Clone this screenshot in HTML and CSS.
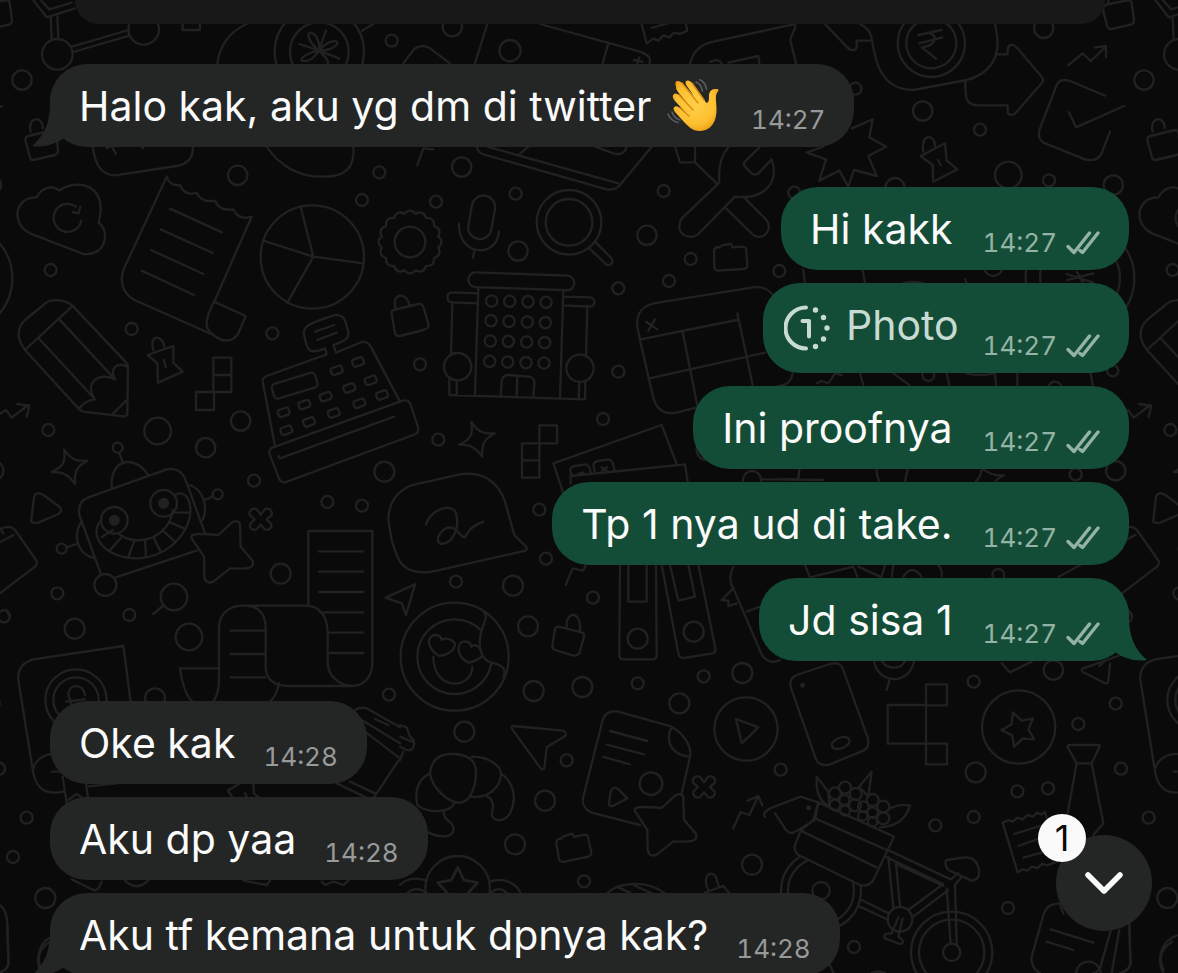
FILE: index.html
```html
<!DOCTYPE html>
<html lang="id">
<head>
<meta charset="utf-8">
<meta name="viewport" content="width=device-width, initial-scale=1">
<title>Chat</title>
<link rel="stylesheet" href="styles.css">
</head>
<body>
<svg class="defs" width="0" height="0" aria-hidden="true">
  <defs>
    <symbol id="ticks" viewBox="0 0 34 24"><path d="M2 15.500L8 21.500L23.500 2M14 19.500L16.500 21.500L32 2" fill="none" stroke="currentColor" stroke-width="3.400" stroke-linecap="round" stroke-linejoin="round"/></symbol>
    <symbol id="tail" viewBox="0 0 44 60"><path d="M18 16C18 35 13 48 0 59C12 61 24 57 32 51L44 40V16Z" fill="currentColor"/></symbol>
  </defs>
</svg>
<div class="chat">
<svg class="wallpaper" aria-hidden="true">
  <defs>
    <path id="sparkle" d="M192,388C210,415 225,425 262,422C230,440 222,455 225,492C205,465 190,455 155,456C190,440 198,425 192,388Z"/>
    <path id="star" d="M575,655C570,640 590,640 655,645L695,608C710,598 722,605 720,620L722,680L758,722C765,745 745,748 690,745L640,785C620,793 612,780 613,765L612,710Z"/>
    <path id="clover" d="M0-14L12-30A14,14 0 0 1 32-12L18,0L32,14A14,14 0 0 1 12,30L0,16L-12,30A14,14 0 0 1-32,14L-18,0L-32-12A14,14 0 0 1-12-30Z"/>
    <path id="five" d="M0-50L16-18L50-12L26,14L32,48L0,34L-32,48L-26,14L-50-12L-16-18Z"/>
    <path id="folder" d="M942,752Q944,740 958,742L966,736L993,732L998,742L1030,740Q1040,742 1039,755L1042,795Q1042,806 1030,807L955,812Q944,812 943,800Z"/>
    <g id="teeth"><path d="M-17-85Q0-104 17-85"/><path d="M-17-85Q0-104 17-85" transform="rotate(22.500)"/><path d="M-17-85Q0-104 17-85" transform="rotate(45)"/><path d="M-17-85Q0-104 17-85" transform="rotate(67.500)"/></g>
    <rect id="key" x="-17" y="-11" width="34" height="22" rx="7" transform="rotate(-20)"/>
    <g id="doodles">
      <g transform="scale(.33333)">
        <circle cx="172" cy="163" r="46"/><circle cx="431" cy="88" r="46"/>
        <path d="M152,50L155,118M172,50L175,118M216,140L386,90M220,156L388,107M100,0L140,52L225,25M122,0L148,28L215,8M548,60V90H600V60"/>
        <circle cx="66" cy="240" r="29"/><circle cx="1175" cy="122" r="18"/><circle cx="713" cy="526" r="29"/><circle cx="1138" cy="517" r="18"/><circle cx="1086" cy="600" r="18"/><circle cx="152" cy="810" r="18"/>
        <circle cx="958" cy="155" r="88"/><circle cx="958" cy="155" r="134"/>
        <path d="M652,190C660,130 690,95 740,72M1086,92L1120,72"/>
        <path d="M957,152C925,125 918,98 932,98C948,100 962,130 957,152C985,118 1015,120 1012,130C1005,145 980,152 957,152C935,155 900,170 905,182C930,188 945,170 957,152C990,185 990,190 975,200M978,92L957,152L898,132M957,152L1018,176"/>
        <path d="M92,395C80,350 130,345 128,385M85,408L160,390Q168,390 170,400L174,455Q173,462 165,465L100,480Q92,480 90,473L76,420Q76,410 85,408Z"/>
        <path d="M278,440C285,490 300,525 345,526L530,498C565,492 580,470 578,440M320,445L335,438L348,462M425,440L430,445M800,440C840,500 900,530 965,530C1040,532 1065,500 1060,440"/>
        <path d="M110,592C125,560 160,555 178,572C220,540 305,545 302,635L296,668C330,690 320,770 250,762L90,700C30,670 45,590 110,592ZM228,620A42,42 0 1 0 244,662M241,620L236,640L218,636"/>
        <path d="M500,530Q510,560 540,555Q555,590 590,578Q605,610 645,602Q660,635 700,628Q715,662 755,650L645,900C612,960 612,985 640,1005C670,1030 700,1025 715,1000L737,948L642,905M500,530L370,810C355,860 380,890 410,903L640,1005M510,626L666,697M482,688L638,759M453,750L610,822M425,812L582,885"/>
        <circle cx="937" cy="771" r="155"/><path d="M940,770L902,620M940,770L790,722M940,770L1090,790M940,770L862,908"/>
      </g>
      <g transform="translate(410 242) scale(.33333)"><circle r="46"/><use href="#teeth"/><use href="#teeth" transform="rotate(90)"/><use href="#teeth" transform="rotate(180)"/><use href="#teeth" transform="rotate(270)"/></g>
      <g transform="translate(400 0) scale(.33333)">
        <circle cx="157" cy="80" r="29"/><circle cx="330" cy="152" r="32"/><circle cx="185" cy="501" r="29"/><circle cx="347" cy="581" r="18"/><circle cx="108" cy="605" r="18"/><circle cx="354" cy="753" r="29"/><circle cx="791" cy="573" r="18"/><circle cx="741" cy="706" r="29"/><circle cx="872" cy="777" r="18"/><circle cx="807" cy="843" r="18"/><circle cx="655" cy="865" r="18"/><circle cx="1138" cy="813" r="18"/>
        <path d="M262,72L225,190M420,72L720,155C745,165 755,175 748,190M625,130L608,190M702,180L728,186M718,172L712,190M10,190L40,150C55,135 75,135 90,145L150,190M725,72L740,130L760,116L775,122L790,106L808,112L822,98L840,102L862,92L858,72M755,84L810,68M870,190C880,150 910,130 940,125L1185,72C1192,85 1165,115 1172,125L1188,190M930,185C950,178 955,178 965,190M985,188L1075,168L1078,190"/>
        <path d="M230,440C232,455 245,462 250,463L620,568C640,572 650,565 660,555L755,440M262,440L655,550M585,440L640,460C660,465 675,460 680,440M360,462L385,440M70,445L52,495M70,445L100,448"/>
        <rect x="210" y="586" width="70" height="132" rx="35" transform="rotate(10 245 652)"/><path d="M177,672C175,770 290,775 297,695M224,748L219,773"/>
        <circle cx="507" cy="667" r="97"/><circle cx="507" cy="667" r="70"/><path d="M568,745L618,793C635,800 642,785 632,772L585,725"/>
        <path d="M958,548L845,655C820,700 870,725 895,702L1005,590C1090,600 1140,550 1115,478L1075,520Q1065,528 1055,520L1035,500Q1028,492 1036,484L1078,442M985,442C960,470 955,510 958,548M825,440L840,487H885V440M885,487L950,550M975,622L1060,705C1090,725 1125,685 1095,655L1030,590"/>
        <use href="#folder"/>
        <rect x="205" y="822" width="318" height="44" rx="22" transform="rotate(2 364 844)"/>
        <path d="M230,880L155,877C138,880 138,905 155,907L230,910M490,890L570,892C588,895 588,918 570,920L490,916M235,865L225,1183M490,870L480,1195M157,907L153,1065M562,918L558,1070"/>
        <circle cx="275" cy="903" r="17"/><circle cx="329" cy="904" r="17"/><circle cx="384" cy="905" r="17"/><circle cx="438" cy="907" r="17"/><circle cx="273" cy="962" r="17"/><circle cx="327" cy="964" r="17"/><circle cx="382" cy="966" r="17"/><circle cx="436" cy="968" r="17"/><circle cx="271" cy="1023" r="17"/><circle cx="325" cy="1024" r="17"/><circle cx="380" cy="1026" r="17"/><circle cx="434" cy="1028" r="17"/><circle cx="269" cy="1084" r="17"/><circle cx="323" cy="1086" r="17"/><circle cx="378" cy="1088" r="17"/><circle cx="432" cy="1089" r="17"/>
      </g>
      <g transform="translate(780 0) scale(.33333)">
        <path d="M135,72L205,145C215,155 230,150 230,140V122H275M240,72C265,85 270,95 275,115C285,180 300,270 400,270L560,240C620,225 665,180 650,100L645,72"/>
        <circle cx="454" cy="130" r="101"/><circle cx="454" cy="130" r="75"/><path d="M415,105L485,90M418,130L487,112M440,98C478,100 470,140 425,142L468,176"/>
        <path d="M652,163H683V145C690,132 700,132 710,142L785,230Q793,240 785,250L710,335C700,350 683,345 683,335V316H590C560,312 555,300 556,242M865,195L908,160L932,183L978,140M945,142L978,138V172M975,287L870,243C845,235 835,245 830,255L780,385C772,405 780,420 790,428L915,478C940,485 955,478 965,460L990,395M867,337L888,382L1032,318"/>
        <path d="M975,15L1045,0Q1053,0 1055,8L1062,60Q1062,72 1052,74L995,87Q985,88 982,80L970,35Q968,20 975,15ZM985,12V0"/>
        <circle cx="791" cy="85" r="29"/><circle cx="428" cy="333" r="29"/><circle cx="600" cy="389" r="18"/><circle cx="685" cy="525" r="40"/><circle cx="807" cy="541" r="18"/><circle cx="1000" cy="555" r="29"/><circle cx="345" cy="563" r="29"/><circle cx="226" cy="266" r="18"/><circle cx="43" cy="578" r="18"/><circle cx="640" cy="800" r="28"/><circle cx="900" cy="835" r="163"/><circle cx="900" cy="835" r="120"/>
        <path d="M215,385L278,358L268,412L318,440L265,468L290,528L222,510L205,560L178,512L118,542L138,478L80,458L130,440M430,455C420,400 465,400 465,438M422,468L495,430L500,482L532,508L460,545L458,495ZM474,480L482,496M70,810L75,850M248,810L255,850M370,850Q400,842 430,850M555,838L560,850M860,822L940,848M862,840L940,820M890,815L910,850"/>
      </g>
      <g transform="translate(0 320) scale(.33333)">
        <path d="M75,90C45,50 55,20 75,0L130,-45C150,-65 195,-65 220,-40L376,125Q384,132 384,145L382,280Q382,290 370,289L250,275Q240,272 232,262ZM75,90L213,-38M118,57L285,238M178,-2L345,178M235,268Q255,240 285,238C250,185 300,155 345,178C325,140 360,125 380,140M340,280L380,240M492,855L460,882"/>
        <circle cx="395" cy="27" r="18"/><circle cx="145" cy="330" r="18"/><circle cx="473" cy="333" r="40"/><circle cx="722" cy="303" r="29"/><circle cx="617" cy="383" r="29"/><circle cx="353" cy="383" r="15"/><circle cx="762" cy="482" r="18"/><circle cx="817" cy="40" r="18"/><circle cx="1153" cy="455" r="30"/><circle cx="982" cy="546" r="18"/><circle cx="1086" cy="557" r="18"/><circle cx="842" cy="761" r="30"/><circle cx="522" cy="831" r="40"/><circle cx="388" cy="885" r="18"/><circle cx="172" cy="820" r="18"/><circle cx="224" cy="926" r="30"/><circle cx="567" cy="951" r="40"/><circle cx="12" cy="889" r="18"/>
        <path d="M460,90C445,40 490,45 493,80M443,105L520,78V128L548,155L474,188L472,130ZM491,120L498,142M640,113H694V216H640ZM640,165H692M588,216H642V270H588ZM-15,290L18,270L35,293L85,255M52,252L88,258L80,290"/>
        <path d="M1175,-20L1185,40Q1190,50 1200,48L1270,30Q1288,24 1286,15L1270,-40Q1265,-50 1255,-48L1180,-30Q1173,-28 1175,-20ZM1188,-32C1170,-85 1225,-85 1228,-42"/>
        <path d="M825,378L788,185Q787,173 800,168L980,103L975,85C930,105 920,90 915,55C905,30 915,20 940,8L1000,-14C1040,-20 1035,10 1045,35C1050,55 1030,65 1000,75L1008,98L1085,66Q1104,62 1115,85L1200,245M825,380L1200,245C1225,235 1228,245 1235,262L1255,325Q1258,338 1240,345L855,487Q843,488 838,478L808,400Q805,385 825,380ZM835,408L840,415L1182,290M945,35L1003,15M952,60L1010,38"/>
        <rect x="816" y="174" width="136" height="46" rx="12" transform="rotate(-17 884 197)"/>
        <use href="#key" transform="translate(1010 151)"/><use href="#key" transform="translate(1074 126)"/><use href="#key" transform="translate(1112 181)"/><use href="#key" transform="translate(1048 204)"/><use href="#key" transform="translate(977 230)"/><use href="#key" transform="translate(913 254)"/><use href="#key" transform="translate(851 277)"/><use href="#key" transform="translate(1146 225)"/><use href="#key" transform="translate(1078 250)"/><use href="#key" transform="translate(1001 279)"/><use href="#key" transform="translate(927 306)"/><use href="#key" transform="translate(859 331)"/>
        <use href="#sparkle"/><use href="#star"/><use href="#clover" transform="translate(782 598)"/>
        <path d="M102,530Q110,512 130,525L178,560Q190,572 175,582L115,608Q92,612 94,600Z"/>
        <path d="M302,760L238,585Q232,545 265,532L500,448C530,442 545,455 555,475L615,640M345,773L590,692M335,500C330,420 400,400 445,465M370,430L358,400M245,605C215,650 235,705 285,715M200,682L230,672M570,495C610,510 625,560 608,600M615,540L640,528"/>
        <circle cx="185" cy="686" r="15"/><circle cx="653" cy="523" r="15"/><circle cx="316" cy="795" r="33"/><circle cx="343" cy="601" r="40"/><circle cx="491" cy="550" r="40"/><circle class="solid" cx="343" cy="601" r="13"/><circle class="solid" cx="491" cy="550" r="13"/>
        <path d="M305,600C262,640 310,715 410,715C520,712 590,610 567,545C560,515 525,515 525,530M355,640C400,680 500,665 520,570M305,652L338,630M330,690L362,655M386,708L402,665M438,708L435,660M482,695L462,655M525,665L492,635M552,625L512,608M570,578L522,578"/>
        <path d="M-190,770L40,645M0,625L10,640M-160,870Q-80,870 0,820L105,740Q115,730 108,720L45,630Q30,612 0,628M1157,833L1245,793L1218,885L1205,850Z"/>
        <path d="M925,857V633H1117V1030C1115,1075 1090,1098 1055,1098H870C830,1098 797,1085 797,1040V930C798,885 780,858 735,857H915C955,857 980,880 983,935V1030C985,1070 1020,1095 1055,1098M735,857C700,855 660,870 657,920V1080C657,1110 650,1130 640,1145M957,694H1090M957,755H1090M957,816H1090M960,877H1090M985,938H1090M985,999H1090M692,932H795M692,1002H795M692,1072H795M540,1045H655M540,1045C545,1090 560,1130 575,1142M837,1090C832,1120 820,1135 810,1145"/>
      </g>
      <g transform="translate(400 320) scale(.33333)">
        <circle cx="60" cy="133" r="18"/><circle cx="655" cy="155" r="18"/><circle cx="609" cy="297" r="18"/><circle cx="115" cy="359" r="18"/><circle cx="418" cy="569" r="18"/><circle cx="438" cy="716" r="18"/><circle cx="168" cy="785" r="18"/><circle cx="339" cy="797" r="30"/><circle cx="579" cy="833" r="18"/><circle cx="384" cy="919" r="30"/><circle cx="713" cy="956" r="30"/><circle cx="881" cy="935" r="30"/><circle cx="920" cy="390" r="30"/><circle cx="1056" cy="480" r="27"/>
        <circle cx="173" cy="140" r="41"/><circle cx="540" cy="145" r="41"/>
        <path d="M302,228L305,185Q307,165 325,165L385,170Q405,172 403,192L400,232M352,168L350,230M148,172V225L555,238L556,182M170,180V225M538,185L536,236"/>
        <path d="M720,60L712,20C708,-20 725,-40 760,-50L1060,-98C1090,-103 1115,-85 1130,-60L1175,130C1185,165 1170,190 1150,195L830,278C790,285 765,265 758,225ZM722,58L1010,0M748,175L1095,98M848,35L893,262M1012,-20L1058,195M738,5L772,28M765,-2L745,32"/>
        <use href="#sparkle" x="22" y="-82"/>
        <path d="M418,316H471V370H418ZM366,370H418V473H366ZM366,421H418"/>
        <path d="M75,757C0,760 -10,710 -25,660L-35,600C-35,540 0,505 45,493L180,463C260,450 300,500 315,545L343,645L378,680Q385,690 372,693L110,752Q90,757 75,757ZM78,613C90,570 155,545 168,580C180,620 160,670 125,672C95,665 130,610 160,625C175,630 180,650 195,652C205,630 220,615 250,605"/>
        <path d="M490,520L460,430L785,315L830,432M512,490V468L855,433L863,485M515,465L510,450Q512,440 525,438L558,433Q570,435 572,460M585,458L580,435Q582,425 595,423L626,418Q640,420 643,452M535,462L550,458M605,442L620,452M620,442L607,452M1085,478H1190M497,795L518,745L550,752L557,735"/>
        <path d="M660,735L658,1005Q658,1018 670,1018H758Q770,1018 770,1005L768,735M685,735V845H740V735M785,735L835,1000Q838,1016 852,1014L938,1000Q948,996 946,985L895,735M810,735L835,842L885,830L865,735M1000,740C985,770 990,790 1000,805L1075,980C1090,1030 1120,1030 1140,1020M1040,875L1085,858M1000,805L965,840L985,842L985,858L1010,850"/>
        <path d="M500,925C495,870 545,870 540,932M475,920L545,937Q555,942 552,950L538,1000Q530,1008 520,1007L465,990Q455,985 457,975L465,928Q468,920 475,920Z"/>
      </g>
      <g transform="translate(780 320) scale(.33333)">
        <circle cx="887" cy="463" r="18"/><circle cx="1007" cy="452" r="29"/><circle cx="655" cy="765" r="18"/><circle cx="445" cy="165" r="18"/><circle cx="998" cy="152" r="17"/><circle cx="825" cy="205" r="20"/>
        <path d="M110,190L125,183L145,190L165,160L185,165M240,160L250,195M340,160L388,195M500,160L508,195M645,160L648,195M712,160V195M932,160L938,195M560,160Q600,170 640,160M290,448Q290,470 298,484M383,448L375,485M605,448Q602,470 588,484M610,448Q640,470 672,466Q650,478 645,485M0,478L130,480M58,448L55,478M75,735L90,772L220,740L232,770M235,740L300,770M315,735L305,770M340,735L335,770M475,735Q488,750 485,770M370,770Q395,730 425,770M1045,870L1055,890"/>
      </g>
      <g transform="translate(0 640) scale(.33333)">
        <circle cx="1167" cy="164" r="18"/><circle cx="80" cy="533" r="18"/><circle cx="39" cy="651" r="18"/><circle cx="136" cy="774" r="30"/><circle cx="465" cy="175" r="30"/><circle cx="228" cy="180" r="92"/><circle cx="228" cy="180" r="68"/>
        <path d="M190,455C140,465 110,450 100,400L55,120C52,80 75,65 100,58L370,18L392,185M255,165C250,130 210,130 205,160C205,185 220,180 212,200M198,185L255,178M100,385C110,350 150,335 180,345M155,395H180M188,410L200,490M258,432L265,480M262,440L350,430M205,480L230,462L255,478M1065,210Q1080,200 1100,205L1200,262M1085,240L1200,310M1095,275L1200,355L1120,475M1125,237L1165,255M1010,430L1110,478M1050,425L1125,460M720,430L683,452L700,475M760,432L762,460L780,475M735,460L742,475M215,718L280,750Q295,755 305,725M375,722Q410,755 445,722M730,722L800,735L810,722M965,725L975,735L1000,725L1030,735L1045,722M0,795Q20,810 22,850L25,970Q22,990 0,998M150,905C110,930 110,960 125,990"/>
      </g>
      <g transform="translate(400 640) scale(.33333)">
        <circle cx="164" cy="50" r="112"/>
        <path class="mask" d="M253,-85L258,-60C225,10 240,60 275,68C310,75 320,90 310,110C345,60 330,-60 253,-85Z"/><circle cx="164" cy="50" r="162"/><path d="M248,-88Q262,-76 256,-60C225,10 240,60 275,68C310,75 320,90 310,110"/>
        <path d="M118,48C80,25 78,-12 105,-15C120,-15 124,-5 125,0C135,-10 165,0 165,15C160,35 140,45 118,48ZM205,68C170,50 168,10 190,5C210,2 213,15 213,20C225,10 240,20 242,30L248,48C240,55 220,65 205,68ZM100,50C100,155 215,150 217,80"/>
        <circle cx="401" cy="153" r="30"/><circle cx="547" cy="141" r="30"/><circle cx="713" cy="130" r="18"/><circle cx="838" cy="190" r="30"/><circle cx="911" cy="109" r="18"/><circle cx="1027" cy="99" r="30"/><circle cx="193" cy="275" r="30"/><circle cx="500" cy="361" r="18"/><circle cx="435" cy="482" r="30"/><circle cx="1142" cy="389" r="18"/><circle cx="345" cy="613" r="30"/><circle cx="552" cy="724" r="18"/><circle cx="1056" cy="674" r="30"/><circle cx="1038" cy="267" r="95"/><circle cx="753" cy="431" r="34"/><circle cx="173" cy="745" r="97"/>
        <path d="M1008,237L1075,262L1025,310ZM340,258L490,272Q502,280 495,288L440,322L433,385Q430,393 422,385L337,268Q332,258 340,258ZM0,255L20,262L30,290Q45,300 42,315Q38,335 20,330L0,320M0,290L35,305M0,360L10,335"/>
        <path d="M90,400C95,350 130,340 165,342C205,345 230,360 228,400C228,440 210,490 175,488C140,485 95,440 90,400M215,350C270,350 305,380 303,405C300,440 270,475 213,470M303,400C345,430 350,480 330,520C310,550 275,545 275,520C285,495 275,475 262,470M90,400C50,420 45,460 52,495C80,520 150,520 163,490M80,575C130,600 165,590 160,560C155,540 130,545 132,515"/>
        <path d="M720,555L575,518C550,505 545,490 550,470L608,240C615,215 640,212 655,215L815,260C850,280 880,320 868,360L845,460M815,260C800,290 800,340 865,350M630,273L742,303M620,314L732,343M610,351L690,373M632,455Q640,435 655,448L682,475L640,497Q626,502 627,490ZM1000,565L1022,516L1048,525L1075,468M1043,482L1075,468L1087,497"/>
        <use href="#star" x="130" y="-141"/><use href="#clover" transform="translate(912 441)"/><use href="#folder" transform="rotate(-8 520 620) translate(-471 -151)"/><use href="#five" transform="translate(173 742) scale(1.200)"/>
        <path d="M0,735C20,715 50,712 80,722M270,725C310,710 350,730 362,760M20,760Q50,735 80,760M270,760Q300,735 320,760M620,760C660,725 740,720 795,760M650,740L690,758M700,735L755,760M925,750C900,700 945,685 950,720L958,742M915,758L970,738L988,760"/>
      </g>
      <g transform="translate(780 640) scale(.33333)">
        <path d="M35,150Q22,118 50,105L150,72Q180,65 188,85L262,290Q272,320 250,332L145,375Q115,378 107,355ZM323,195H438V311H323ZM438,133H501V196H438ZM438,311H501V373H438Z"/><circle class="solid" cx="68" cy="136" r="4"/><ellipse cx="182" cy="309" rx="28" ry="16" transform="rotate(-20 182 309)"/>
        <circle cx="581" cy="125" r="18"/><circle cx="820" cy="90" r="29"/><circle cx="1007" cy="191" r="18"/><circle cx="895" cy="252" r="18"/><circle cx="716" cy="261" r="110"/><circle cx="587" cy="397" r="30"/><circle cx="712" cy="454" r="18"/><circle cx="804" cy="445" r="18"/><circle cx="1023" cy="386" r="18"/><circle cx="581" cy="531" r="18"/><circle cx="466" cy="556" r="18"/><circle cx="684" cy="804" r="18"/><circle cx="222" cy="921" r="18"/>
        <use href="#five" transform="translate(716 264) rotate(-20)"/>
        <path d="M282,62C290,130 385,140 402,65M305,62C320,90 365,90 375,62M328,122L320,150M665,70L690,97L755,65M1022,45L910,85Q900,90 910,97L975,130Q985,132 985,122L990,72M958,78L975,62M865,315H957Q960,316 958,322L935,370H890L862,320ZM890,370L862,525M935,370L970,550L940,585"/>
        <path d="M668,548L685,540L698,545L712,533L728,538L742,525L758,530L772,518L785,524L795,515L800,535M668,548L713,697L728,688L742,692L756,680L772,684L786,672L802,676L830,665M703,582L780,558M715,618L780,595M730,653L785,638"/>
        <path d="M845,790C810,790 800,800 790,825L755,950Q752,985 780,999M812,868L940,908M800,905L880,930M992,872L960,985Q950,999 940,999M1018,870L995,999M1048,860L1052,970Q1050,990 1020,999M840,795L850,820M1195,885C1140,900 1130,960 1150,999M150,975L160,999M275,999Q295,990 315,999"/><circle cx="925" cy="1002" r="37"/>
        <circle cx="123" cy="752" r="120"/><circle cx="123" cy="752" r="99"/><circle cx="123" cy="752" r="26"/><circle cx="515" cy="937" r="122"/><circle cx="515" cy="937" r="98"/>
        <path class="mask" d="M115,487L342,590L280,720Q265,742 240,735L55,645Q40,630 45,615L62,572L100,540Z"/>
        <path d="M115,487L342,590L280,720Q265,742 240,735L55,645Q40,630 45,615L62,572L100,540ZM62,572L290,682M105,535L325,632M-45,530Q-55,520 -30,505L62,470L115,487L105,540L40,578Q28,582 18,570L-15,520M328,632L512,718L535,700M320,652L490,732L385,810M505,750L400,830M348,672L490,738M325,650L340,805M348,670L360,800M245,780L325,820M240,800L325,840M500,660L555,652Q590,650 597,690Q600,720 575,722L505,690Q490,670 500,660M545,710L525,735L530,912M500,745L512,912"/>
        <circle class="solid" cx="86" cy="503" r="4"/><circle class="mask" cx="515" cy="937" r="26"/><circle cx="515" cy="937" r="26"/><circle cx="360" cy="838" r="37"/>
        <path d="M355,832L335,880Q305,880 315,895L360,912Q380,908 355,890L368,835"/>
        <path d="M110,410L145,455L148,498Q105,480 110,410ZM275,395L237,440L265,470ZM330,505Q360,490 390,497Q370,560 300,562"/>
        <circle cx="165" cy="460" r="18"/><circle cx="195" cy="443" r="18"/><circle cx="227" cy="462" r="18"/><circle cx="193" cy="480" r="15"/><circle cx="165" cy="495" r="16"/><circle cx="225" cy="496" r="18"/><circle cx="195" cy="512" r="15"/><circle cx="278" cy="480" r="18"/><circle cx="250" cy="500" r="16"/><circle cx="278" cy="518" r="16"/><circle cx="310" cy="500" r="18"/><circle cx="310" cy="535" r="18"/><circle cx="248" cy="528" r="14"/><circle cx="278" cy="545" r="14"/>
      </g>
    </g>
  </defs>
  <use href="#doodles"/><use href="#doodles" x="1122"/><use href="#doodles" x="-1122"/>
</svg>

<div class="notice"></div>

<main class="messages">
  <section class="group received">
    <div class="bubble tailed">
      <svg class="tail" aria-hidden="true"><use href="#tail"/></svg>
      <p class="text">Halo kak, aku yg dm di twitter <svg class="emoji" viewBox="0 0 54 54" role="img" aria-label="👋">
        <defs><radialGradient id="skin" cx=".5" cy=".45" r=".6"><stop offset="0" stop-color="#ffd04a"/><stop offset=".7" stop-color="#fcc02f"/><stop offset="1" stop-color="#ec9c13"/></radialGradient></defs>
        <path d="M9 7.500Q7 2 11 2Q13 2 15 4L27 17L19.500 6.500Q17 2 20.500 1.500Q23 1 25 4L39 23.500C42 25 42 20 42 17C42 11 46 9.500 50.500 10Q52.500 10.500 50.500 13C48 16 49 21 49.500 29C50 43 44 51.500 33 52C25 52 21 47 17 43L8 33Q5 29 8 27.500Q10 26.500 13 29L21 36L8 22Q4 17 7 15Q9 13.500 12 16L24 29L11 13Q8.500 10 9 7.500Z" fill="url(#skin)"/>
        <path d="M15 4L31 24M12 16L26 31M13 29L22 37M25 4L37 21" fill="none" stroke="#dd8c10" stroke-width="1.500" stroke-linecap="round"/>
        <path d="M29 3Q34 5 35.500 12M33 0.800Q38 3 39.500 10M1 35Q4 42 11 43.500M5 33Q7 39 13 41" fill="none" stroke="#5b5d5f" stroke-width="1.600" stroke-linecap="round"/>
      </svg></p>
      <time class="meta">14:27</time>
    </div>
  </section>

  <section class="group sent">
    <div class="bubble"><p class="text">Hi kakk</p><span class="meta"><time>14:27</time><svg class="ticks" role="img" aria-label="Terkirim"><use href="#ticks"/></svg></span></div>
    <div class="bubble photo">
      <svg class="once" viewBox="0 0 46 46" aria-hidden="true"><path d="M22 2.500A20.500 20.500 0 0 0 22 43.500" fill="none" stroke="currentColor" stroke-width="4" stroke-linecap="round"/><path d="M18.500 16H25V31.500" fill="none" stroke="currentColor" stroke-width="4" stroke-linecap="round" stroke-linejoin="round"/><g fill="currentColor"><circle cx="31.500" cy="5" r="2.700"/><circle cx="39.500" cy="12.500" r="2.700"/><circle cx="43" cy="23" r="2.700"/><circle cx="39.500" cy="34" r="2.700"/><circle cx="31.500" cy="41.500" r="2.700"/></g></svg>
      <p class="text">Photo</p><span class="meta"><time>14:27</time><svg class="ticks" role="img" aria-label="Terkirim"><use href="#ticks"/></svg></span>
    </div>
    <div class="bubble"><p class="text">Ini proofnya</p><span class="meta"><time>14:27</time><svg class="ticks" role="img" aria-label="Terkirim"><use href="#ticks"/></svg></span></div>
    <div class="bubble"><p class="text">Tp 1 nya ud di take.</p><span class="meta"><time>14:27</time><svg class="ticks" role="img" aria-label="Terkirim"><use href="#ticks"/></svg></span></div>
    <div class="bubble tailed"><svg class="tail" aria-hidden="true"><use href="#tail"/></svg><p class="text">Jd sisa 1</p><span class="meta"><time>14:27</time><svg class="ticks" role="img" aria-label="Terkirim"><use href="#ticks"/></svg></span></div>
  </section>

  <section class="group received">
    <div class="bubble"><p class="text">Oke kak</p><time class="meta">14:28</time></div>
    <div class="bubble"><p class="text">Aku dp yaa</p><time class="meta">14:28</time></div>
    <div class="bubble tailed"><svg class="tail" aria-hidden="true"><use href="#tail"/></svg><p class="text">Aku tf kemana untuk dpnya kak?</p><time class="meta">14:28</time></div>
  </section>
</main>

<button class="jump" type="button" aria-label="1 pesan baru">
  <svg class="chevron" viewBox="0 0 38 24" aria-hidden="true"><path d="M3 4L19 20L35 4" fill="none" stroke="currentColor" stroke-width="5.500" stroke-linecap="round" stroke-linejoin="round"/></svg>
  <span class="badge">1</span>
</button>
</div>
</body>
</html>
```
FILE: styles.css
```css
* {
  box-sizing: border-box;
}

body {
  margin: 0;
  background: #0a0a0a;
  font-family: Inter, "Liberation Sans", sans-serif;
}

.defs {
  position: absolute;
}

.chat {
  position: relative;
  height: 100vh;
  overflow: hidden;
}

.wallpaper {
  position: absolute;
  inset: 0;
  width: 100%;
  height: 100%;
  fill: none;
  stroke: #212121;
  stroke-width: 7;
  stroke-linecap: round;
  stroke-linejoin: round;
}

.wallpaper .solid {
  fill: #212121;
}

.wallpaper .mask {
  fill: #0a0a0a;
  stroke: none;
}

.notice {
  position: relative;
  height: 24px;
  margin: 0 73px 0 75px;
  border-radius: 0 0 24px 24px;
  background: #181818;
}

.messages {
  position: relative;
  display: flex;
  flex-direction: column;
  gap: 40px;
  padding: 40px 49px 0 50px;
}

.group {
  display: flex;
  flex-direction: column;
  gap: 13px;
}

.received {
  align-items: flex-start;
  color: #242626;
}

.sent {
  align-items: flex-end;
  color: #144d37;
}

.bubble {
  position: relative;
  display: flex;
  align-items: flex-end;
  gap: 30px;
  padding: 18px 29px 11px;
  border-radius: 37px;
  background: currentColor;
}

.received .bubble {
  gap: 28px;
}

.tail {
  position: absolute;
  bottom: 0;
  left: -18px;
  width: 44px;
  height: 60px;
}

.sent .tail {
  left: auto;
  right: -18px;
  transform: scaleX(-1);
}

.text {
  position: relative;
  margin: 0;
  padding-bottom: 6px;
  color: #fafafa;
  font-size: 41px;
  line-height: 48px;
}

.emoji {
  width: 54px;
  height: 54px;
  margin: -6px 2px -6px 4px;
  vertical-align: -6px;
}

.meta {
  position: relative;
  display: flex;
  align-items: center;
  gap: 9px;
  color: #989a9a;
  font-size: 26px;
  line-height: 32px;
  font-variant-numeric: tabular-nums;
}

.sent .meta {
  color: #93b3a5;
}

.ticks {
  width: 34px;
  height: 24px;
}

.photo {
  padding-left: 21px;
}

.photo .text {
  padding-bottom: 13px;
  color: #c8dbd2;
}

.photo .meta {
  margin-left: -6px;
}

.once {
  flex: none;
  width: 46px;
  height: 46px;
  margin: 0 -14px 11px 0;
  color: #c8dbd2;
}

.jump {
  position: absolute;
  right: 26px;
  bottom: 42px;
  display: flex;
  align-items: center;
  justify-content: center;
  width: 96px;
  height: 96px;
  padding: 0;
  border: 0;
  border-radius: 50%;
  background: #242626;
  color: #fafafa;
  font: inherit;
}

.chevron {
  width: 38px;
  height: 24px;
}

.badge {
  position: absolute;
  top: -21px;
  left: -18px;
  width: 48px;
  height: 48px;
  border-radius: 50%;
  background: #fafafa;
  color: #0a0a0a;
  font-size: 36px;
  line-height: 48px;
  text-align: center;
}
```
